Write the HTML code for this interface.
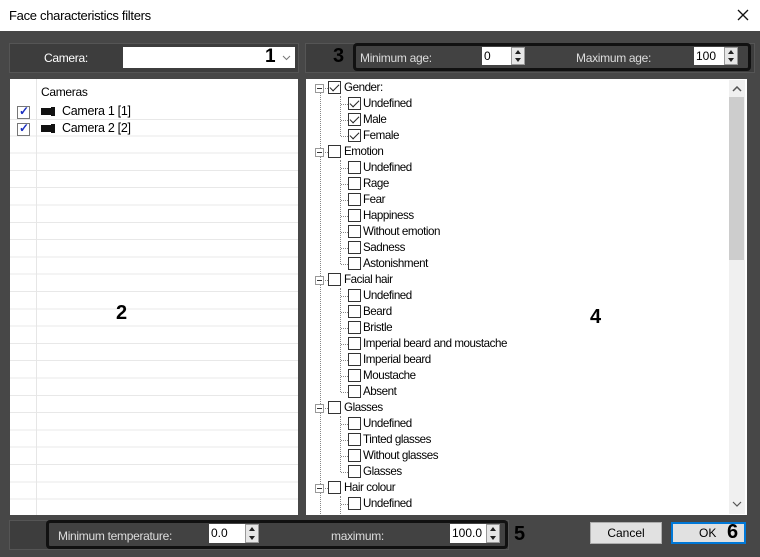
<!DOCTYPE html><html><head><style>
*{box-sizing:border-box;margin:0;padding:0}
body{width:760px;height:557px;background:#474747;font-family:"Liberation Sans",sans-serif;font-size:12px;position:relative;overflow:hidden;color:#000}
.a{position:absolute}
.t{position:absolute;white-space:nowrap;letter-spacing:-0.3px}
.tr{font-size:11.6px;letter-spacing:-0.45px}
.cb{position:absolute;width:13px;height:13px;border:1px solid #333;background:#fff}
.chk::after{content:"";position:absolute;left:3px;top:0px;width:4px;height:8px;border:solid #222;border-width:0 1.5px 1.5px 0;transform:rotate(45deg)}
.exp{position:absolute;width:9px;height:9px;border:1px solid #999;background:#fff}
.exp::after{content:"";position:absolute;left:1px;top:3px;width:5px;height:1px;background:#333}
.spin{position:absolute;width:14px;background:#e6e6e6;border:1px solid #999}
.spin::before{content:"";position:absolute;left:3px;top:2px;border:3px solid transparent;border-bottom:4px solid #222;border-top:0}
.spin::after{content:"";position:absolute;left:3px;bottom:2px;border:3px solid transparent;border-top:4px solid #222;border-bottom:0}
.inp{position:absolute;background:#fff;padding-left:2px;line-height:18px}
.dl{position:absolute;border-left:1px dotted #888}
.dh{position:absolute;border-top:1px dotted #888;height:0}
.num{position:absolute;font-weight:bold;font-size:20px;color:#000}
</style></head><body>
<div class="a" style="left:0;top:0;width:760px;height:31px;background:#fff"></div>
<div class="t" style="left:9px;top:8px;font-size:13px">Face characteristics filters</div>
<svg class="a" style="left:737px;top:9px" width="12" height="12"><path d="M1 1L11 11M11 1L1 11" stroke="#111" stroke-width="1.3"/></svg>

<div class="a" style="left:9px;top:43px;width:290px;height:30px;background:#3d3d3d;border:1px solid #555"></div>
<div class="t" style="left:44px;top:51px;color:#fff">Camera:</div>
<div class="a" style="left:123px;top:47px;width:172px;height:21px;background:#fff"></div>
<div class="num" style="left:265px;top:46px;font-size:19px">1</div>
<svg class="a" style="left:282px;top:55px" width="9" height="6"><path d="M1 1L4.5 4.5L8 1" stroke="#777" fill="none"/></svg>

<div class="a" style="left:305px;top:43px;width:450px;height:30px;background:#3d3d3d;border:1px solid #555"></div>
<div class="num" style="left:333px;top:45px">3</div>
<div class="a" style="left:353px;top:43px;width:398px;height:28px;background:#424242;border:3px solid #111;border-radius:4px"></div>
<div class="t" style="left:360px;top:51px;color:#ddd">Minimum age:</div>
<div class="inp" style="left:482px;top:47px;width:30px;height:18px">0</div>
<div class="spin" style="left:511px;top:47px;height:18px"></div>
<div class="t" style="left:576px;top:51px;color:#ddd">Maximum age:</div>
<div class="inp" style="left:694px;top:47px;width:31px;height:18px">100</div>
<div class="spin" style="left:724px;top:47px;height:18px"></div>

<div class="a" style="left:10px;top:79px;width:288px;height:436px;background:#fff;
background-image:repeating-linear-gradient(to bottom,transparent 0,transparent 16.3px,#e8e8e8 16.3px,#e8e8e8 17.3px);background-position:0 40px"></div>
<div class="a" style="left:10px;top:79px;width:288px;height:40px;background:#fff"></div>
<div class="a" style="left:10px;top:119px;width:288px;height:1px;background:#e8e8e8"></div>
<div class="a" style="left:36px;top:79px;width:1px;height:436px;background:#e6e6e6"></div>
<div class="t" style="left:41px;top:85px">Cameras</div>
<div class="cb" style="left:17px;top:106px;border-color:#777"><span style="position:absolute;left:1px;top:-3px;color:#1a2fbf;font-weight:bold;font-size:12px">✓</span></div>
<div class="cb" style="left:17px;top:123px;border-color:#777"><span style="position:absolute;left:1px;top:-3px;color:#1a2fbf;font-weight:bold;font-size:12px">✓</span></div>
<div class="a" style="left:41px;top:108px;width:10px;height:7px;background:#111"></div><div class="a" style="left:51px;top:107px;width:4px;height:9px;background:#111"></div>
<div class="a" style="left:41px;top:125px;width:10px;height:7px;background:#111"></div><div class="a" style="left:51px;top:124px;width:4px;height:9px;background:#111"></div>
<div class="t" style="left:62px;top:104px;font-size:12.5px">Camera 1 [1]</div>
<div class="t" style="left:62px;top:121px;font-size:12.5px">Camera 2 [2]</div>
<div class="num" style="left:116px;top:302px">2</div>

<div class="a" style="left:306px;top:79px;width:441px;height:436px;background:#fff"></div>
<div class="a" style="left:729px;top:80px;width:16px;height:434px;background:#f0f0f0"></div>
<div class="a" style="left:729px;top:97px;width:15px;height:163px;background:#cdcdcd"></div>
<svg class="a" style="left:732px;top:86px" width="10" height="6"><path d="M1 5L5 1L9 5" stroke="#555" stroke-width="1.5" fill="none"/></svg>
<svg class="a" style="left:732px;top:501px" width="10" height="6"><path d="M1 1L5 5L9 1" stroke="#555" stroke-width="1.2" fill="none"/></svg>
<div class="num" style="left:590px;top:306px">4</div>
<div class="dl" style="left:320px;top:93px;height:421px"></div>
<div class="dl" style="left:340px;top:96px;height:40px"></div>
<div class="dl" style="left:340px;top:160px;height:104px"></div>
<div class="dl" style="left:340px;top:288px;height:104px"></div>
<div class="dl" style="left:340px;top:416px;height:56px"></div>
<div class="dl" style="left:340px;top:496px;height:18px"></div>
<div id="tree"></div>
<script>
var items=[[0,"Gender:",1],[1,"Undefined",1],[1,"Male",1],[1,"Female",1],[0,"Emotion"],[1,"Undefined"],[1,"Rage"],[1,"Fear"],[1,"Happiness"],[1,"Without emotion"],[1,"Sadness"],[1,"Astonishment"],[0,"Facial hair"],[1,"Undefined"],[1,"Beard"],[1,"Bristle"],[1,"Imperial beard and moustache"],[1,"Imperial beard"],[1,"Moustache"],[1,"Absent"],[0,"Glasses"],[1,"Undefined"],[1,"Tinted glasses"],[1,"Without glasses"],[1,"Glasses"],[0,"Hair colour"],[1,"Undefined"]];
var h="";items.forEach(function(it,i){var y=80+16*i;
if(it[0]==0){h+='<div class="exp" style="left:315px;top:'+(y+4)+'px"></div><div class="dh" style="left:325px;top:'+(y+8)+'px;width:3px"></div><div class="cb'+(it[2]?' chk':'')+'" style="left:328px;top:'+(y+1)+'px"></div><div class="t tr" style="left:344px;top:'+(y+1)+'px">'+it[1]+'</div>';}
else{h+='<div class="dh" style="left:341px;top:'+(y+8)+'px;width:7px"></div><div class="cb'+(it[2]?' chk':'')+'" style="left:348px;top:'+(y+1)+'px"></div><div class="t tr" style="left:363px;top:'+(y+1)+'px">'+it[1]+'</div>';}});
document.getElementById("tree").innerHTML=h;
</script>

<div class="a" style="left:9px;top:520px;width:500px;height:30px;background:#3d3d3d;border:1px solid #555"></div>
<div class="a" style="left:46px;top:520px;width:462px;height:29px;background:#424242;border:3px solid #111;border-radius:4px"></div>
<div class="t" style="left:58px;top:529px;color:#ddd">Minimum temperature:</div>
<div class="inp" style="left:209px;top:524px;width:36px;height:19px">0.0</div>
<div class="spin" style="left:245px;top:524px;height:19px"></div>
<div class="t" style="left:331px;top:529px;color:#ddd">maximum:</div>
<div class="inp" style="left:450px;top:524px;width:36px;height:19px">100.0</div>
<div class="spin" style="left:486px;top:524px;height:19px"></div>
<div class="num" style="left:514px;top:523px">5</div>
<div class="a" style="left:590px;top:522px;width:72px;height:22px;background:#e1e1e1;border:1px solid #adadad;text-align:center;line-height:20px">Cancel</div>
<div class="a" style="left:671px;top:522px;width:75px;height:22px;background:#e1e1e1;border:2px solid #0078d7;line-height:18px;padding-left:26px">OK</div>
<div class="num" style="left:727px;top:521px">6</div>
</body></html>
